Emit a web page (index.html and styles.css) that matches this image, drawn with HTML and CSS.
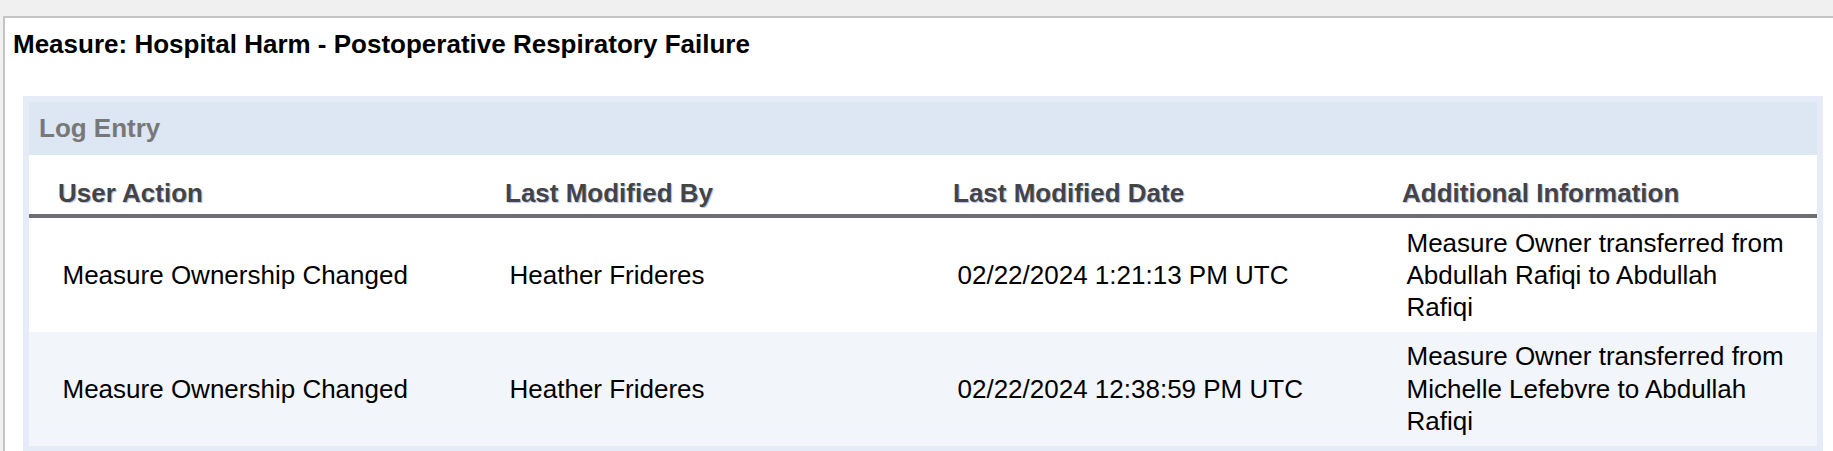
FILE: index.html
```html
<!DOCTYPE html>
<html>
<head>
<meta charset="utf-8">
<link rel="stylesheet" href="styles.css">
</head>
<body>
<div class="panel">
  <h1 class="title">Measure: Hospital Harm - Postoperative Respiratory Failure</h1>
  <div class="log-box">
    <div class="log-header">Log Entry</div>
    <table class="log-table">
      <colgroup>
        <col class="c1"><col class="c2"><col class="c3"><col class="c4">
      </colgroup>
      <thead>
        <tr>
          <th>User Action</th>
          <th>Last Modified By</th>
          <th>Last Modified Date</th>
          <th>Additional Information</th>
        </tr>
      </thead>
      <tbody>
        <tr>
          <td>Measure Ownership Changed</td>
          <td>Heather Frideres</td>
          <td>02/22/2024 1:21:13 PM UTC</td>
          <td class="info">Measure Owner transferred from Abdullah Rafiqi to Abdullah Rafiqi</td>
        </tr>
        <tr class="alt">
          <td>Measure Ownership Changed</td>
          <td>Heather Frideres</td>
          <td>02/22/2024 12:38:59 PM UTC</td>
          <td class="info">Measure Owner transferred from Michelle Lefebvre to Abdullah Rafiqi</td>
        </tr>
      </tbody>
    </table>
  </div>
</div>
</body>
</html>
```
FILE: styles.css
```css
html, body {
  margin: 0;
  padding: 0;
}
body {
  background: #f0f0f0;
  font-family: "Liberation Sans", Arial, sans-serif;
  font-size: 26px;
  color: #000;
  overflow: hidden;
}
.panel {
  margin: 16px 0 0 3px;
  border-top: 2px solid #c4c4c4;
  border-left: 2px solid #c4c4c4;
  background: #fff;
  padding: 11px 10px 40px 8px;
  min-height: 500px;
}
.title {
  margin: 0;
  font-size: 26px;
  font-weight: bold;
  line-height: 30px;
  color: #000;
}
.log-box {
  margin: 37px 0 0 10px;
  border: 6px solid #e5ecf7;
  background: #fff;
}
.log-header {
  background: #dce7f3;
  color: #787878;
  font-weight: bold;
  line-height: 29px;
  padding: 12px 10px;
}
.log-table {
  width: 100%;
  border-collapse: collapse;
  table-layout: fixed;
}
.c1 { width: 447px; }
.c2 { width: 448px; }
.c3 { width: 449px; }
.log-table th {
  text-align: left;
  font-weight: bold;
  color: #444;
  text-shadow: 1px 1px 0 #bcc6f0;
  line-height: 32px;
  padding: 22px 8px 5px 29px;
  border-bottom: 4px solid #6d6e71;
}
.log-table td {
  line-height: 32.3px;
  padding: 8.5px 8px 8.5px 33.5px;
  vertical-align: middle;
}
.log-table td.info {
  padding-right: 30px;
}
.log-table tr.alt td {
  background: #f2f5fa;
}
```
